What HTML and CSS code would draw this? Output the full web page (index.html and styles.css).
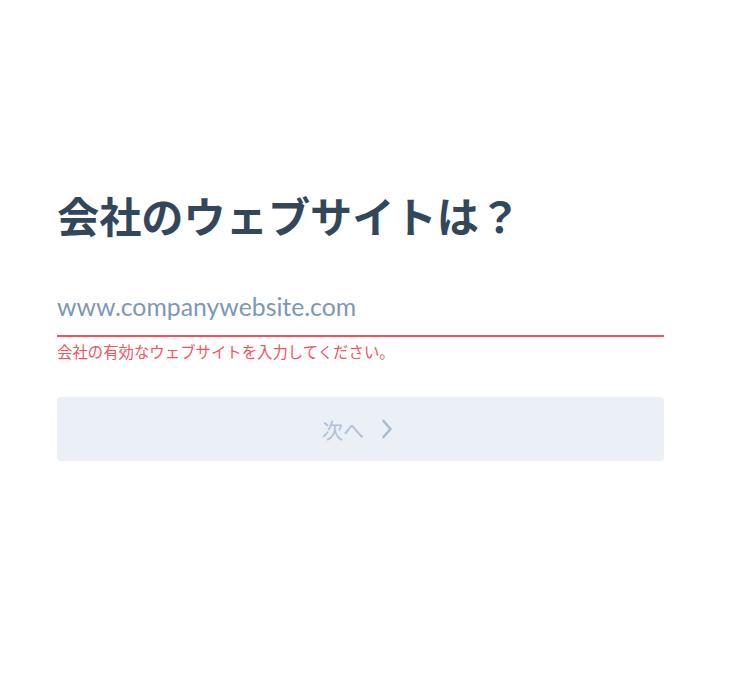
FILE: index.html
```html
<!DOCTYPE html>
<html lang="ja">
<head>
<meta charset="utf-8">
<link rel="stylesheet" href="styles.css">
</head>
<body>
<main class="form">
  <h1 class="title">会社のウェブサイトは？</h1>
  <div class="field">
    <input class="url" type="text" placeholder="www.companywebsite.com">
    <p class="error">会社の有効なウェブサイトを入力してください。</p>
  </div>
  <button class="next" type="button">
    <span class="label">次へ</span>
    <svg class="chev" width="12" height="20" viewBox="0 0 12 20"><polyline points="2.5,2 9.5,10 2.5,18" fill="none" stroke="#a9bbcf" stroke-width="2.6" stroke-linecap="round" stroke-linejoin="round"/></svg>
  </button>
</main>
</body>
</html>
```
FILE: styles.css
```css
html, body {
  margin: 0;
  padding: 0;
  background: #ffffff;
}
body {
  font-family: "Noto Sans CJK JP", "Noto Sans", sans-serif;
}
.form {
  width: 607px;
  margin-left: 57px;
  padding-top: 190px;
}
.title {
  margin: 0;
  font-size: 42.2px;
  line-height: 50px;
  font-weight: 700;
  color: #33475b;
}
.field {
  margin-top: 44px;
}
.url {
  display: block;
  box-sizing: border-box;
  width: 100%;
  height: 53px;
  padding: 0 0 7px;
  border: none;
  border-bottom: 2px solid #f2545b;
  outline: none;
  font-family: Lato, "Open Sans", sans-serif;
  font-size: 24.8px;
  color: #33475b;
  background: transparent;
}
.url::placeholder {
  color: #7c98b6;
  opacity: 1;
}
.error {
  margin: 3px 0 0;
  font-size: 15.4px;
  line-height: 22px;
  color: #f2545b;
}
.next {
  display: flex;
  align-items: center;
  justify-content: center;
  gap: 17px;
  width: 100%;
  height: 64px;
  margin-top: 35px;
  padding: 0 6px 0 0;
  border: none;
  border-radius: 4px;
  background: #eaf0f6;
  font-family: "Noto Sans CJK JP", sans-serif;
  font-size: 21px;
  color: #b0c1d4;
  cursor: default;
}
.chev {
  display: block;
}
```
